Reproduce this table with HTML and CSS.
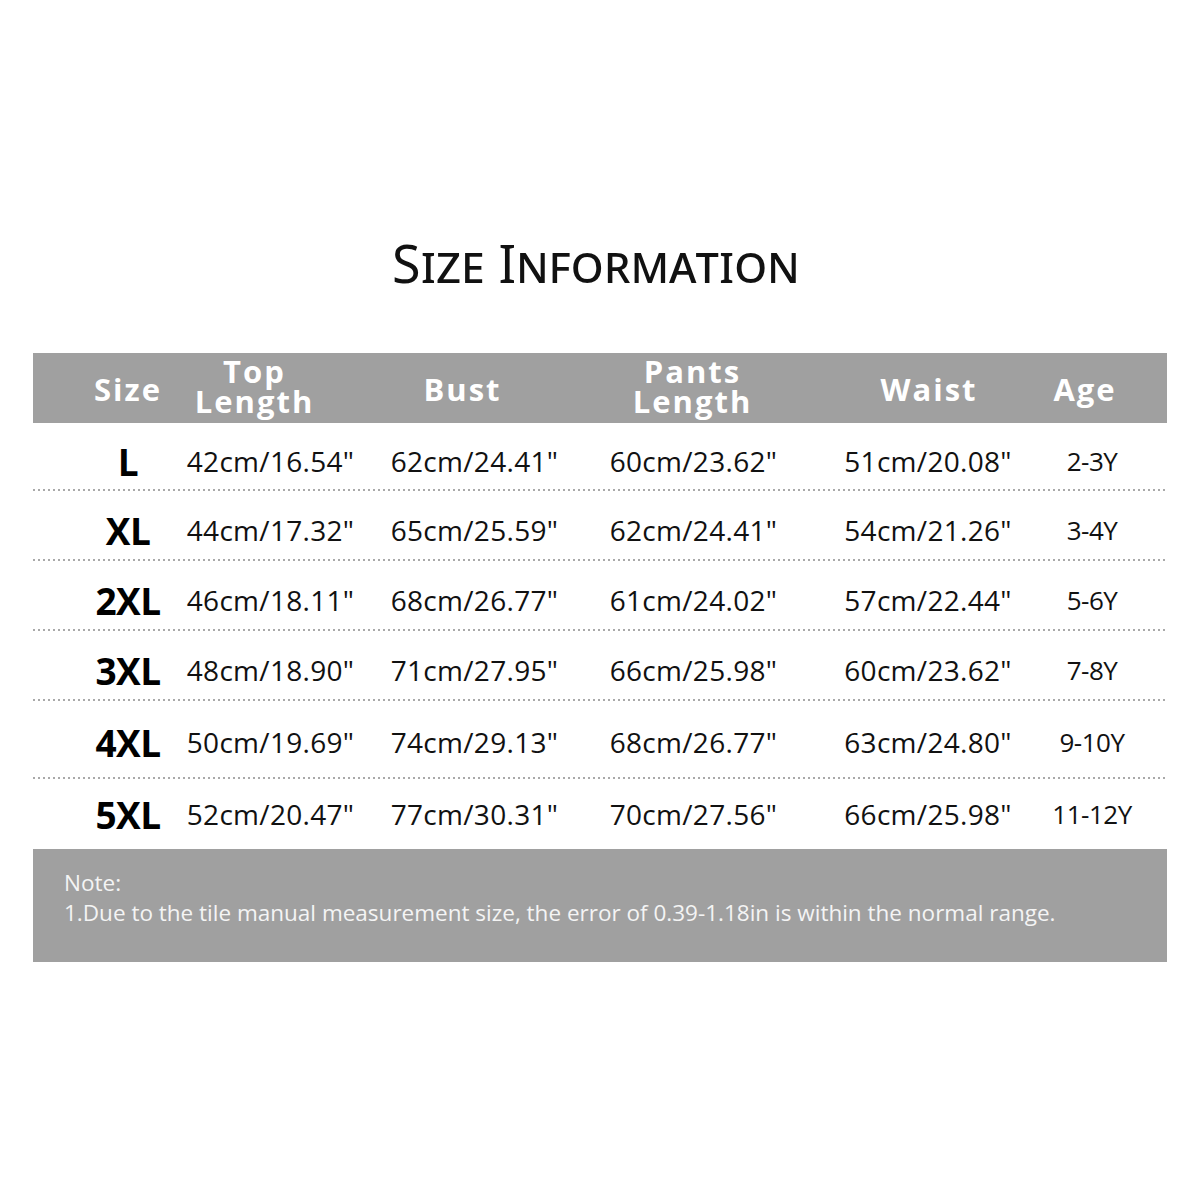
FILE: index.html
```html
<!DOCTYPE html>
<html lang="en">
<head>
<meta charset="utf-8">
<title>Size Information</title>
<link rel="stylesheet" href="styles.css">
</head>
<body>
<div class="page">
  <h1 class="title">Size Information</h1>
  <div class="table">
    <div class="row head">
      <div class="cell c1 h">Size</div>
      <div class="cell c2 h two"><span>Top</span><span>Length</span></div>
      <div class="cell c3 h">Bust</div>
      <div class="cell c4 h two"><span>Pants</span><span>Length</span></div>
      <div class="cell c5 h">Waist</div>
      <div class="cell c6 h">Age</div>
    </div>
    <div class="row data r1">
      <div class="cell c1 sz">L</div>
      <div class="cell c2">42cm/16.54"</div>
      <div class="cell c3">62cm/24.41"</div>
      <div class="cell c4">60cm/23.62"</div>
      <div class="cell c5">51cm/20.08"</div>
      <div class="cell c6 age">2-3Y</div>
    </div>
    <div class="row data">
      <div class="cell c1 sz">XL</div>
      <div class="cell c2">44cm/17.32"</div>
      <div class="cell c3">65cm/25.59"</div>
      <div class="cell c4">62cm/24.41"</div>
      <div class="cell c5">54cm/21.26"</div>
      <div class="cell c6 age">3-4Y</div>
    </div>
    <div class="row data">
      <div class="cell c1 sz">2XL</div>
      <div class="cell c2">46cm/18.11"</div>
      <div class="cell c3">68cm/26.77"</div>
      <div class="cell c4">61cm/24.02"</div>
      <div class="cell c5">57cm/22.44"</div>
      <div class="cell c6 age">5-6Y</div>
    </div>
    <div class="row data">
      <div class="cell c1 sz">3XL</div>
      <div class="cell c2">48cm/18.90"</div>
      <div class="cell c3">71cm/27.95"</div>
      <div class="cell c4">66cm/25.98"</div>
      <div class="cell c5">60cm/23.62"</div>
      <div class="cell c6 age">7-8Y</div>
    </div>
    <div class="row data r5">
      <div class="cell c1 sz">4XL</div>
      <div class="cell c2">50cm/19.69"</div>
      <div class="cell c3">74cm/29.13"</div>
      <div class="cell c4">68cm/26.77"</div>
      <div class="cell c5">63cm/24.80"</div>
      <div class="cell c6 age">9-10Y</div>
    </div>
    <div class="row data last">
      <div class="cell c1 sz">5XL</div>
      <div class="cell c2">52cm/20.47"</div>
      <div class="cell c3">77cm/30.31"</div>
      <div class="cell c4">70cm/27.56"</div>
      <div class="cell c5">66cm/25.98"</div>
      <div class="cell c6 age">11-12Y</div>
    </div>
  </div>
  <div class="note">
    <p>Note:</p>
    <p>1.Due to the tile manual measurement size, the error of 0.39-1.18in is within the normal range.</p>
  </div>
</div>
</body>
</html>
```
FILE: styles.css
```css
html, body {
  margin: 0;
  padding: 0;
  background: #ffffff;
}

.page {
  width: 1200px;
  height: 1200px;
  padding: 226px 33px 0;
  box-sizing: border-box;
  font-family: "Open Sans", "Noto Sans", sans-serif;
  color: #111;
}

.title {
  margin: 0 0 54px;
  height: 73px;
  text-align: center;
  font-family: "Noto Sans", "Open Sans", sans-serif;
  font-weight: 400;
  font-variant: small-caps;
  font-size: 52px;
  line-height: 73px;
  letter-spacing: 0.2px;
  color: #111;
  padding-right: 8px;
}

.table {
  width: 1134px;
}

.row {
  display: grid;
  grid-template-columns: 166px 173px 211px 227px 200px 157px;
  align-items: center;
}

.head {
  height: 70px;
  background: #a0a0a0;
}

.data {
  height: 70px;
  padding-top: 8px;
  box-sizing: border-box;
  background-image: linear-gradient(to right, #a9a9a9 0 2px, transparent 2px 5px);
  background-size: 5px 2px;
  background-repeat: repeat-x;
  background-position: 0 bottom;
}

.data.r1 {
  height: 68px;
}

.data.r5 {
  height: 78px;
  padding-top: 4px;
}

.data.last {
  background-image: none;
  padding-top: 0;
}

.cell {
  display: flex;
  justify-content: center;
  white-space: nowrap;
  font-size: 28px;
  letter-spacing: 0.3px;
  line-height: 1;
}

.h {
  color: #ffffff;
  font-weight: 700;
  font-size: 31px;
  letter-spacing: 2px;
  padding-top: 2px;
}

.h.two {
  flex-direction: column;
  align-items: center;
  line-height: 30px;
  height: 62px;
  padding-top: 0;
  margin-top: -4px;
}

.h.two span {
  display: block;
  height: 30px;
}

.sz {
  font-weight: 700;
  font-size: 37px;
  letter-spacing: -0.5px;
  color: #000;
}

.age {
  font-size: 26px;
  letter-spacing: -0.5px;
}

/* column centre adjustments for data */
.data .c1 { padding-left: 24px; }
.data .c2 { padding-right: 30px; }
.data .c3 { padding-right: 6px; }
.data .c4 { padding-right: 6px; }
.data .c5 { padding-left: 36px; }
.data .c6 { padding-left: 7px; }

/* column centre adjustments for header */
.head .c1 { padding-left: 24px; }
.head .c2 { padding-right: 62px; }
.head .c3 { padding-right: 30px; }
.head .c4 { padding-right: 8px; }
.head .c5 { padding-left: 38px; }
.head .c6 { padding-right: 7px; }

.note {
  margin-top: 0;
  height: 113px;
  background: #a0a0a0;
  padding: 19px 31px 0;
  box-sizing: border-box;
  color: #f4f4f4;
  font-size: 22.5px;
  line-height: 30px;
}

.note p {
  margin: 0;
}
```
